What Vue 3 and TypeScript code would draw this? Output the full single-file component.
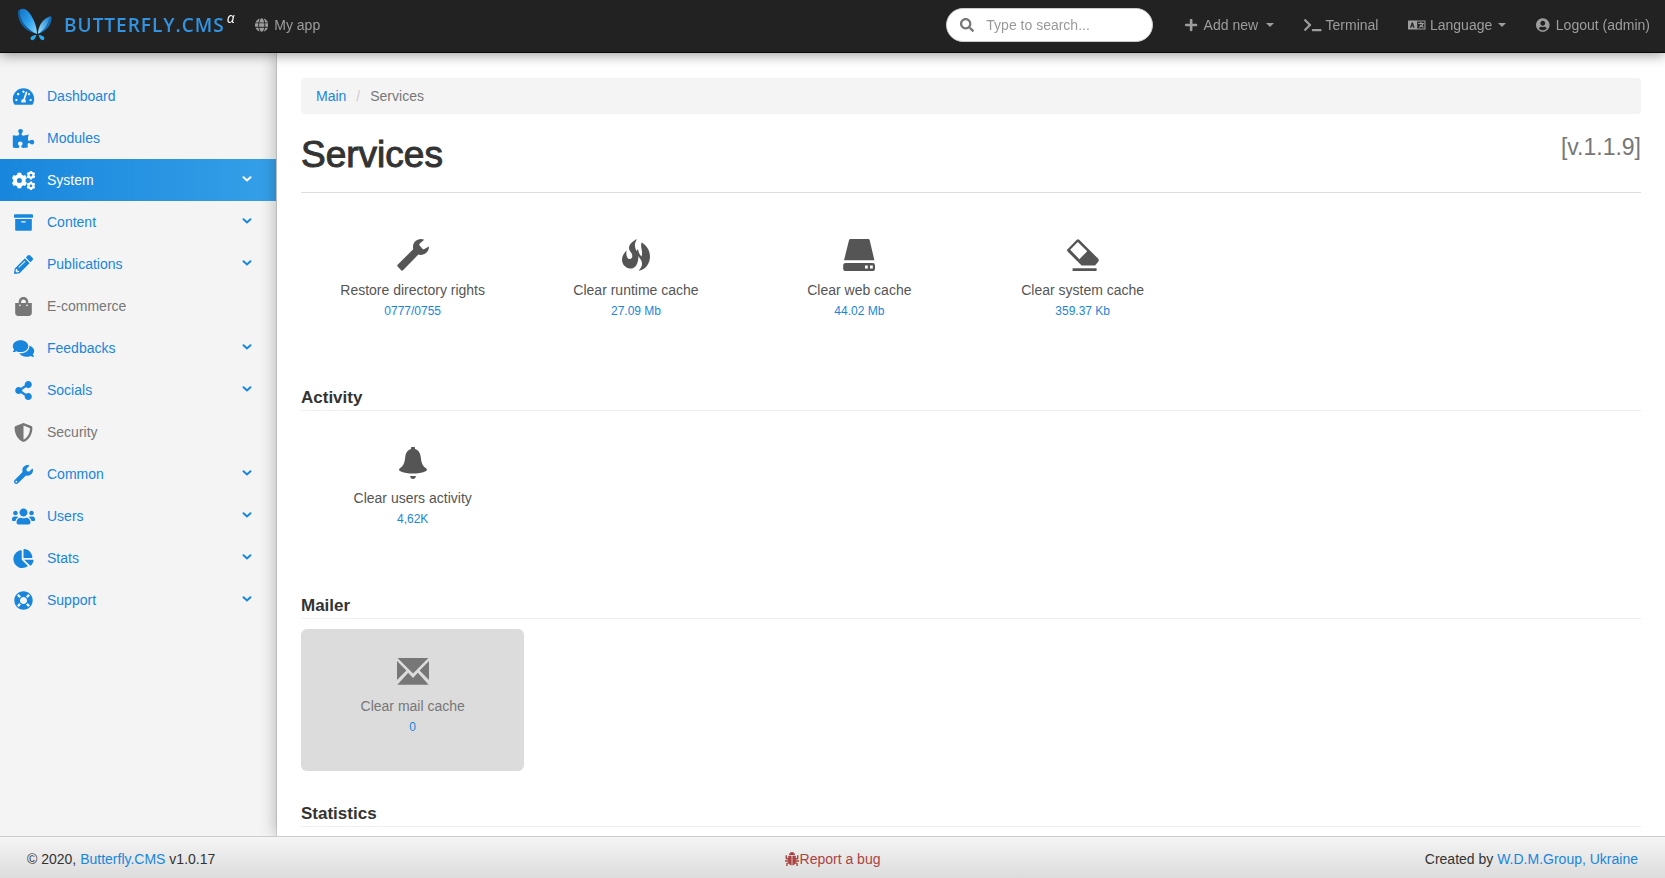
<script setup lang="ts">
import { ref } from 'vue'

interface Glyph {
  box: string
  d: string
  rule?: 'nonzero' | 'evenodd'
}

interface MenuItem {
  label: string
  icon: string
  expandable: boolean
  active?: boolean
  muted?: boolean
}

interface Tile {
  label: string
  value: string
  icon: string
  disabled?: boolean
}

interface Section {
  title: string
  tiles: Tile[]
}

// Closed outline of a toothed wheel with a round hole in it.
function gear(cx: number, cy: number, r: number, teeth: number, hole: number): string {
  const inner = r * 0.8
  const step = (Math.PI * 2) / teeth
  const at = (radius: number, angle: number): string =>
    `${(cx + radius * Math.cos(angle)).toFixed(1)} ${(cy + radius * Math.sin(angle)).toFixed(1)}`
  const points: string[] = []
  for (let i = 0; i < teeth; i++) {
    const a = i * step + Math.PI / 2
    points.push(at(inner, a - step * 0.32), at(r, a - step * 0.22), at(r, a + step * 0.22), at(inner, a + step * 0.32))
  }
  return `M${points.join('L')}ZM${cx + hole} ${cy}a${hole} ${hole} 0 1 0 ${-2 * hole} 0a${hole} ${hole} 0 1 0 ${2 * hole} 0Z`
}

const glyphs: Record<string, Glyph> = {
  gauge: {
    box: '0 0 576 512',
    d: 'M288 32C128.94 32 0 160.94 0 320c0 52.8 14.25 102.26 39.06 144.8 5.61 9.62 16.3 15.2 27.44 15.2h443c11.14 0 21.83-5.58 27.44-15.2C561.75 422.26 576 372.8 576 320c0-159.06-128.94-288-288-288zm0 64c14.71 0 26.58 10.13 30.32 23.65-1.11 2.26-2.64 4.23-3.45 6.67l-9.22 27.67c-5.13 3.49-10.97 6.01-17.64 6.01-17.67 0-32-14.33-32-32S270.33 96 288 96zM96 384c-17.67 0-32-14.33-32-32s14.33-32 32-32 32 14.33 32 32-14.33 32-32 32zm48-160c-17.67 0-32-14.33-32-32s14.33-32 32-32 32 14.33 32 32-14.33 32-32 32zm246.77-72.41l-61.33 184C343.13 347.33 352 364.54 352 384c0 11.72-3.38 22.55-8.88 32H232.88c-5.5-9.45-8.88-20.28-8.88-32 0-33.94 26.5-61.43 59.9-63.59l61.34-184.01c4.17-12.56 17.73-19.45 30.36-15.17 12.57 4.19 19.35 17.79 15.17 30.36zm14.66 57.2l15.52-46.55c3.47-1.29 7.13-2.23 11.05-2.23 17.67 0 32 14.33 32 32s-14.33 32-32 32c-11.38-.01-20.89-6.28-26.57-15.22zM480 384c-17.67 0-32-14.33-32-32s14.33-32 32-32 32 14.33 32 32-14.33 32-32 32z'
  },
  puzzle: {
    box: '0 0 576 512',
    d: 'M519.442 288.651c-41.519 0-59.5 31.593-82.058 31.593C377.409 320.244 432 144 432 144s-196.288 80-196.288-3.297c0-35.827 36.288-46.25 36.288-85.985C272 19.216 243.885 0 210.539 0c-34.654 0-66.366 18.891-66.366 56.346 0 41.364 31.711 59.277 31.711 81.75C175.885 207.719 0 166.758 0 166.758v333.237s178.635 41.047 178.635-28.662c0-22.473-40-40.107-40-81.471 0-37.456 29.25-56.346 63.577-56.346 33.673 0 61.788 19.216 61.788 54.717 0 39.735-36.288 50.158-36.288 85.985 0 60.803 129.675 25.73 181.23 25.73 0 0-34.725-120.101 25.827-120.101 35.962 0 46.423 36.152 86.308 36.152C556.712 416 576 387.99 576 354.443c0-34.199-18.962-65.792-56.558-65.792z'
  },
  gears: {
    box: '0 0 640 512',
    d: gear(206, 256, 220, 6, 70) + gear(528, 108, 124, 6, 38) + gear(528, 404, 124, 6, 38)
  },
  archive: {
    box: '0 0 512 512',
    d: 'M32 448c0 17.7 14.3 32 32 32h384c17.7 0 32-14.3 32-32V160H32v288zm160-212c0-6.6 5.4-12 12-12h104c6.6 0 12 5.4 12 12v8c0 6.6-5.4 12-12 12H204c-6.6 0-12-5.4-12-12v-8zM480 32H32C14.3 32 0 46.3 0 64v48c0 8.8 7.2 16 16 16h480c8.8 0 16-7.2 16-16V64c0-17.7-14.3-32-32-32z'
  },
  pencil: {
    box: '0 0 512 512',
    d: 'M497.9 142.1l-46.1 46.1c-4.7 4.7-12.3 4.7-17 0l-111-111c-4.7-4.7-4.7-12.3 0-17l46.1-46.1c18.7-18.7 49.1-18.7 67.9 0l60.1 60.1c18.8 18.7 18.8 49.1 0 67.9zM284.2 99.8L21.6 362.4.4 483.9c-2.9 16.4 11.4 30.6 27.8 27.8l121.5-21.3 262.6-262.6c4.7-4.7 4.7-12.3 0-17l-111-111c-4.8-4.7-12.4-4.7-17.1 0zM124.1 339.9c-5.5-5.5-5.5-14.3 0-19.8l154-154c5.5-5.5 14.3-5.5 19.8 0s5.5 14.3 0 19.8l-154 154c-5.5 5.5-14.3 5.5-19.8 0zM88 424h48v36.3l-64.5 11.3-31.1-31.1L51.7 376H88v48z'
  },
  bag: {
    box: '0 0 448 512',
    d: 'M352 160v-32C352 57.42 294.579 0 224 0 153.42 0 96 57.42 96 128v32H0v272c0 44.183 35.817 80 80 80h288c44.183 0 80-35.817 80-80V160h-96zm-192-32c0-35.29 28.71-64 64-64s64 28.71 64 64v32H160v-32zm160 120c-13.255 0-24-10.745-24-24s10.745-24 24-24 24 10.745 24 24-10.745 24-24 24zm-192 0c-13.255 0-24-10.745-24-24s10.745-24 24-24 24 10.745 24 24-10.745 24-24 24z'
  },
  comments: {
    box: '0 0 576 512',
    d: 'M416 192c0-88.4-93.1-160-208-160S0 103.6 0 192c0 34.3 14.1 65.9 38 92-13.4 30.2-35.5 54.2-35.8 54.5-2.2 2.3-2.8 5.7-1.5 8.7S4.8 352 8 352c36.6 0 66.9-12.3 88.7-25 32.2 15.7 70.3 25 111.3 25 114.9 0 208-71.6 208-160zm122 220c23.9-26 38-57.7 38-92 0-66.9-53.5-124.2-129.3-148.1.9 6.6 1.3 13.3 1.3 20.1 0 105.9-107.7 192-240 192-10.8 0-21.3-.8-31.7-1.9C207.8 439.6 281.8 480 368 480c41 0 79.1-9.2 111.3-25 21.8 12.7 52.1 25 88.7 25 3.2 0 6.1-1.9 7.3-4.8 1.3-2.9.7-6.3-1.5-8.7-.3-.3-22.4-24.2-35.8-54.5z'
  },
  share: {
    box: '0 0 448 512',
    d: 'M352 320c-22.608 0-43.387 7.819-59.79 20.895l-102.486-64.054a96.551 96.551 0 0 0 0-41.683l102.486-64.054C308.613 184.181 329.392 192 352 192c53.019 0 96-42.981 96-96S405.019 0 352 0s-96 42.981-96 96c0 7.158.79 14.13 2.276 20.841L155.79 180.895C139.387 167.819 118.608 160 96 160c-53.019 0-96 42.981-96 96s42.981 96 96 96c22.608 0 43.387-7.819 59.79-20.895l102.486 64.054A96.301 96.301 0 0 0 256 416c0 53.019 42.981 96 96 96s96-42.981 96-96-42.981-96-96-96z'
  },
  shield: {
    box: '0 0 512 512',
    d: 'M466.5 83.7l-192-80a48.15 48.15 0 0 0-36.9 0l-192 80C27.7 91.1 16 108.6 16 128c0 198.5 114.5 335.7 221.5 380.3 11.8 4.9 25.1 4.9 36.9 0C360.1 472.6 496 349.3 496 128c0-19.4-11.7-36.9-29.5-44.3zM256.1 446.3l-.1-381 175.9 73.3c-3.3 151.4-82.1 261.1-175.8 307.7z'
  },
  wrench: {
    box: '0 0 512 512',
    d: 'M507.73 109.1c-2.24-9.03-13.54-12.09-20.12-5.51l-74.36 74.36-67.88-11.31-11.31-67.88 74.36-74.36c6.62-6.62 3.43-17.9-5.66-20.16-47.38-11.74-99.55.91-136.58 37.93-39.64 39.64-50.55 97.1-34.05 147.2L18.74 402.76c-24.99 24.99-24.99 65.51 0 90.5 24.99 24.99 65.51 24.99 90.5 0l213.21-213.21c50.12 16.71 107.47 5.68 147.37-34.22 37.07-37.07 49.7-89.32 37.91-136.73zM64 472c-13.25 0-24-10.75-24-24 0-13.26 10.75-24 24-24s24 10.74 24 24c0 13.25-10.75 24-24 24z'
  },
  users: {
    box: '0 0 640 512',
    d: 'M96 224c35.3 0 64-28.7 64-64s-28.7-64-64-64-64 28.7-64 64 28.7 64 64 64zm448 0c35.3 0 64-28.7 64-64s-28.7-64-64-64-64 28.7-64 64 28.7 64 64 64zm32 32h-64c-17.6 0-33.5 7.1-45.1 18.6 40.3 22.1 68.9 62 75.1 109.4h66c17.7 0 32-14.3 32-32v-32c0-35.3-28.7-64-64-64zm-256 0c61.9 0 112-50.1 112-112S381.9 32 320 32 208 82.1 208 144s50.1 112 112 112zm76.8 32h-8.3c-20.8 10-43.9 16-68.5 16s-47.6-6-68.5-16h-8.3C179.6 288 128 339.6 128 403.2V432c0 26.5 21.5 48 48 48h288c26.5 0 48-21.5 48-48v-28.8c0-63.6-51.6-115.2-115.2-115.2zm-223.7-13.4C161.5 263.1 145.6 256 128 256H64c-35.3 0-64 28.7-64 64v32c0 17.7 14.3 32 32 32h65.9c6.3-47.4 34.9-87.3 75.2-109.4z'
  },
  pie: {
    box: '0 0 544 512',
    d: 'M527.79 288H290.5l158.03 158.03c6.04 6.04 15.98 6.53 22.19.68 38.7-36.46 65.32-85.61 73.13-140.86 1.34-9.46-6.51-17.85-16.06-17.85zm-15.83-64.8C503.72 103.74 408.26 8.28 288.8.04 279.68-.59 272 7.1 272 16.24V240h223.77c9.14 0 16.82-7.68 16.19-16.8zM224 288V50.71c0-9.55-8.39-17.4-17.84-16.06C86.99 51.49-4.1 155.6.14 280.37 4.5 408.51 114.83 513.59 243.03 511.98c50.4-.63 96.97-16.87 135.26-44.03 7.9-5.6 8.42-17.23 1.57-24.08L224 288z'
  },
  ring: {
    box: '0 0 512 512',
    d: 'M256 8C119.033 8 8 119.033 8 256s111.033 248 248 248 248-111.033 248-248S392.967 8 256 8zm173.696 119.559l-63.399 63.399c-10.987-18.559-26.67-34.252-45.255-45.255l63.399-63.399a218.396 218.396 0 0 1 45.255 45.255zM256 352c-53.019 0-96-42.981-96-96s42.981-96 96-96 96 42.981 96 96-42.981 96-96 96zM127.559 82.304l63.399 63.399c-18.559 10.987-34.252 26.67-45.255 45.255l-63.399-63.399a218.372 218.372 0 0 1 45.255-45.255zM82.304 384.441l63.399-63.399c10.987 18.559 26.67 34.252 45.255 45.255l-63.399 63.399a218.396 218.396 0 0 1-45.255-45.255zm302.137 45.255l-63.399-63.399c18.559-10.987 34.252-26.67 45.255-45.255l63.399 63.399a218.403 218.403 0 0 1-45.255 45.255z'
  },
  search: {
    box: '0 0 512 512',
    d: 'M505 442.7L405.3 343c-4.5-4.5-10.6-7-17-7H372c27.6-35.3 44-79.7 44-128C416 93.1 322.9 0 208 0S0 93.1 0 208s93.1 208 208 208c48.3 0 92.7-16.4 128-44v16.3c0 6.4 2.5 12.5 7 17l99.7 99.7c9.4 9.4 24.6 9.4 33.9 0l28.3-28.3c9.4-9.4 9.4-24.6.1-34zM208 336c-70.7 0-128-57.2-128-128 0-70.7 57.2-128 128-128 70.7 0 128 57.2 128 128 0 70.7-57.2 128-128 128z'
  },
  globe: {
    box: '0 0 496 512',
    d: 'M336.5 160C322 70.7 287.8 8 248 8s-74 62.7-88.5 152h177zM152 256c0 22.2 1.2 43.5 3.3 64h185.3c2.1-20.5 3.3-41.8 3.3-64s-1.2-43.5-3.3-64H155.3c-2.1 20.5-3.3 41.8-3.3 64zm324.7-96c-28.6-67.9-86.5-120.4-158-141.6 24.4 33.8 41.2 84.7 50 141.6h108zM177.2 18.4C105.8 39.6 47.8 92.1 19.3 160h108c8.7-56.9 25.5-107.8 49.9-141.6zM487.4 192H372.7c2.1 21 3.3 42.5 3.3 64s-1.2 43-3.3 64h114.6c5.5-20.5 8.6-41.8 8.6-64s-3.1-43.5-8.5-64zM120 256c0-21.5 1.2-43 3.3-64H8.6C3.2 212.5 0 233.8 0 256s3.2 43.5 8.6 64h114.6c-2-21-3.2-42.5-3.2-64zm39.5 96c14.5 89.3 48.7 152 88.5 152s74-62.7 88.5-152h-177zm159.3 141.6c71.4-21.2 129.4-73.7 158-141.6h-108c-8.8 56.9-25.6 107.8-50 141.6zM19.3 352c28.6 67.9 86.5 120.4 158 141.6-24.4-33.8-41.2-84.7-50-141.6h-108z'
  },
  plus: {
    box: '0 0 448 512',
    d: 'M416 208H272V64c0-17.67-14.33-32-32-32h-32c-17.67 0-32 14.33-32 32v144H32c-17.67 0-32 14.33-32 32v32c0 17.67 14.33 32 32 32h144v144c0 17.67 14.33 32 32 32h32c17.67 0 32-14.33 32-32V304h144c17.67 0 32-14.33 32-32v-32c0-17.67-14.33-32-32-32z'
  },
  terminal: {
    box: '0 0 640 512',
    d: 'M257.981 272.971L63.638 467.314c-9.373 9.373-24.569 9.373-33.941 0L7.029 444.647c-9.357-9.357-9.375-24.522-.04-33.901L161.011 256 6.99 101.255c-9.335-9.379-9.317-24.544.04-33.901l22.667-22.667c9.373-9.373 24.569-9.373 33.941 0L257.981 239.03c9.373 9.372 9.373 24.568 0 33.941zM640 456v-32c0-13.255-10.745-24-24-24H312c-13.255 0-24 10.745-24 24v32c0 13.255 10.745 24 24 24h304c13.255 0 24-10.745 24-24z'
  },
  language: {
    box: '0 0 640 512',
    d: 'M24 88h592a24 24 0 0 1 24 24v288a24 24 0 0 1-24 24H24a24 24 0 0 1-24-24V112a24 24 0 0 1 24-24ZM336 128V384H600V128ZM136 168L72 352H120L132 314H184L196 352H244L180 168ZM158 228L172 274H144ZM446 148H494V180H580V220H560Q550 256 522 288Q544 302 576 312L560 354Q520 342 490 318Q456 344 408 356L392 314Q430 306 458 288Q440 268 430 244H476Q482 252 490 260Q506 242 512 220H372V180H446Z'
  },
  account: {
    box: '0 0 496 512',
    d: 'M248 8C111 8 0 119 0 256s111 248 248 248 248-111 248-248S385 8 248 8zm0 96c48.6 0 88 39.4 88 88s-39.4 88-88 88-88-39.4-88-88 39.4-88 88-88zm0 344c-58.7 0-111.3-26.6-146.5-68.2 18.8-35.4 55.6-59.8 98.5-59.8 2.4 0 4.8.4 7.1 1.1 13 4.2 26.6 6.9 40.9 6.9 14.3 0 28-2.7 40.9-6.9 2.3-.7 4.7-1.1 7.1-1.1 42.9 0 79.7 24.4 98.5 59.8C359.3 421.4 306.7 448 248 448z'
  },
  spanner: {
    box: '0 0 32 32',
    d: 'M27.2 .8C24 -.6 20.4 .2 18 2.6C16.2 4.6 15.6 7.4 16.2 10.2L.6 25.8Q-.2 26.6 .6 27.4L4.4 31.4Q5.2 32 6 31.2L21.4 15.6C24.200 16.400 27 15.800 29.200 13.800C31.400 11.800 32.200 9.600 31.800 7.400L27 10.200Q26.200 10.600 25.400 9.800L22.600 6.400Q22 5.400 22.800 4.600Z'
  },
  fire: {
    box: '0 0 32 32',
    rule: 'nonzero',
    d: 'M17 0C13.600 5.500 15 9 17 13C18.500 16 18.800 18.500 18 21.500C17 27 14 30 10 29.500C5 29 2 25 2 20.500C2 17 4 14 6.500 11.500C6 15 6.500 18 8 19.500C10 21 13 19.500 12.200 16C11.500 13 9 12 9 9C9 5 13 2 17 0ZM21.500 3.500C26 6 30 11 30 17.500C30 25 25 31 18.500 31.800C22 28 23 25 21 21C19 18 17.500 16 16.500 12L18 10C18.500 13 19.500 15.500 21.500 17.500C23.500 13 20 8 21.500 3.500Z'
  },
  drive: {
    box: '0 0 32 32',
    d: 'M7.400 0H25.200Q26.400 0 26.700 1.200L31.400 21.200H1L6 1.200Q6.300 0 7.400 0ZM3 24H29.600Q32 24 32 26.400V29.400Q32 32 29.400 32H3Q.2 32 .2 29.400V26.400Q.2 24 3 24ZM22 26.600V29.400H24.800V26.600ZM27 26.600V29.400H29.800V26.600Z'
  },
  eraser: {
    box: '0 0 32 32',
    d: 'M9.800 .8Q11 -.4 12.200 .8L31 19.600Q32.400 21 31.400 22.400L28 26.600H14.600L.8 12.800Q-.6 11.200 .8 10ZM10.800 3L3.200 10.800L12.400 20.200L20.200 12.200ZM5.600 29.200H29.600V32H5.600Z'
  },
  bell: {
    box: '0 0 32 32',
    d: 'M14 2V.8Q14 0 14.800 0H17.200Q18 0 18 .8V2C21.800 3 23.400 6.600 23.800 10.400C24.400 15.600 25.400 18.600 29.400 21.600Q30.800 22.800 29.200 24C25.600 26 20 26.600 16 26.600S6.400 26 2.800 24Q1.200 22.800 2.600 21.600C6.600 18.600 7.600 15.600 8.200 10.400C8.600 6.600 10.200 3 14 2ZM13 29H19Q18.400 32 16 32T13 29Z'
  },
  envelope: {
    box: '0 0 32 32',
    d: 'M.6 3H31.400L16 18.600ZM0 6L9.400 15.600L0 25ZM32 6V25L22.600 15.600ZM.4 29.800L11.200 17.800L16 23L20.800 17.800L31.600 29.800Z'
  },
  bug: {
    box: '0 0 14 14',
    d: 'M4 3Q4.500 0 7 0T10 3ZM3.200 3.800H6.600V13.400Q3.600 12.800 3.200 9.800H0V8.300H3.200V7.400H1.800Q.6 7.400 .6 6.200V3.200H2V5.900H3.200ZM10.800 3.800H7.400V13.400Q10.400 12.800 10.800 9.800H14V8.300H10.800V7.400H12.200Q13.400 7.400 13.400 6.200V3.200H12V5.900H10.800ZM3.300 10.300L4 11.300L2.600 12V14H1.200V11.300ZM10.700 10.300L10 11.300L11.400 12V14H12.800V11.300Z'
  }
}

const menu: MenuItem[] = [
  { label: 'Dashboard', icon: 'gauge', expandable: false },
  { label: 'Modules', icon: 'puzzle', expandable: false },
  { label: 'System', icon: 'gears', expandable: true, active: true },
  { label: 'Content', icon: 'archive', expandable: true },
  { label: 'Publications', icon: 'pencil', expandable: true },
  { label: 'E-commerce', icon: 'bag', expandable: false, muted: true },
  { label: 'Feedbacks', icon: 'comments', expandable: true },
  { label: 'Socials', icon: 'share', expandable: true },
  { label: 'Security', icon: 'shield', expandable: false, muted: true },
  { label: 'Common', icon: 'wrench', expandable: true },
  { label: 'Users', icon: 'users', expandable: true },
  { label: 'Stats', icon: 'pie', expandable: true },
  { label: 'Support', icon: 'ring', expandable: true }
]

const sections: Section[] = [
  {
    title: '',
    tiles: [
      { label: 'Restore directory rights', value: '0777/0755', icon: 'spanner' },
      { label: 'Clear runtime cache', value: '27.09 Mb', icon: 'fire' },
      { label: 'Clear web cache', value: '44.02 Mb', icon: 'drive' },
      { label: 'Clear system cache', value: '359.37 Kb', icon: 'eraser' }
    ]
  },
  { title: 'Activity', tiles: [{ label: 'Clear users activity', value: '4,62K', icon: 'bell' }] },
  { title: 'Mailer', tiles: [{ label: 'Clear mail cache', value: '0', icon: 'envelope', disabled: true }] },
  { title: 'Statistics', tiles: [] }
]

const query = ref('')
</script>

<template>
  <div class="page">
    <header class="topbar">
      <a href="#" class="brand">
        <svg class="logo" viewBox="0 0 34 34" aria-hidden="true">
          <defs>
            <linearGradient id="wing-left" x1="0" y1="0" x2="1" y2="1">
              <stop offset="0" stop-color="#1473c4" />
              <stop offset=".5" stop-color="#2b9dea" />
              <stop offset="1" stop-color="#8fdcff" />
            </linearGradient>
            <linearGradient id="wing-right" x1="1" y1="0" x2="0" y2="1">
              <stop offset="0" stop-color="#1b7fd0" />
              <stop offset="1" stop-color="#9be4ff" />
            </linearGradient>
          </defs>
          <path fill="#145f9e" d="M0 5C0 14 6 23 18.500 26C11 20 6 13 4 2C1 1 0 2 0 5Z" />
          <path fill="url(#wing-left)" d="M2 1.500C6 -1 11 3 14 9C17 14 19 20 19 26C9 21 1 13 2 1.500Z" />
          <path fill="#176fb3" d="M33.500 9C34 16 29 23 20.500 26C26 20 29 15 30.500 9C32 8 33 8 33.500 9Z" />
          <path fill="url(#wing-right)" d="M31.500 8.500C30 17 26 22 20 26C20 20 23 12 31.500 8.500Z" />
          <path fill="#2baaf0" d="M18.500 27C17 32 14.500 33 13 31.500C11.500 29.500 14 27 18.500 27ZM20.500 27C22 32 24.500 33 26 31.500C27.500 29.500 25 27 20.500 27Z" />
        </svg>
        <span class="wordmark">BUTTERFLY.CMS</span><sup class="stage">α</sup>
      </a>
      <a href="#" class="nav-link">
        <svg class="nav-icon" :viewBox="glyphs.globe.box" aria-hidden="true"><path :d="glyphs.globe.d" /></svg>
        My app
      </a>
      <form class="search" role="search" @submit.prevent>
        <svg class="search-icon" :viewBox="glyphs.search.box" aria-hidden="true"><path :d="glyphs.search.d" /></svg>
        <input v-model="query" type="text" aria-label="Search" placeholder="Type to search..." />
      </form>
      <nav class="actions">
        <button type="button" class="nav-link">
          <svg class="nav-icon" :viewBox="glyphs.plus.box" aria-hidden="true"><path :d="glyphs.plus.d" /></svg>
          Add new
          <span class="caret"></span>
        </button>
        <a href="#" class="nav-link tight">
          <svg class="nav-icon" :viewBox="glyphs.terminal.box" aria-hidden="true"><path :d="glyphs.terminal.d" /></svg>
          Terminal
        </a>
        <button type="button" class="nav-link tight">
          <svg class="nav-icon" :viewBox="glyphs.language.box" aria-hidden="true">
            <path fill-rule="evenodd" :d="glyphs.language.d" />
          </svg>
          Language
          <span class="caret"></span>
        </button>
        <a href="#" class="nav-link">
          <svg class="nav-icon" :viewBox="glyphs.account.box" aria-hidden="true"><path :d="glyphs.account.d" /></svg>
          Logout (admin)
        </a>
      </nav>
    </header>

    <div class="body">
      <aside class="sidebar">
        <ul class="menu">
          <li v-for="item in menu" :key="item.label">
            <a href="#" class="menu-link" :class="{ active: item.active, muted: item.muted }">
              <svg class="menu-icon" :viewBox="glyphs[item.icon].box" aria-hidden="true">
                <path fill-rule="evenodd" :d="glyphs[item.icon].d" />
              </svg>
              <span class="menu-label">{{ item.label }}</span>
              <svg v-if="item.expandable" class="chevron" viewBox="0 0 10 10" aria-hidden="true">
                <path d="M1.500 3.200L5 6.500L8.500 3.200" />
              </svg>
            </a>
          </li>
        </ul>
      </aside>

      <main class="content">
        <nav class="breadcrumb" aria-label="Breadcrumb">
          <a href="#">Main</a>
          <span class="slash">/</span>
          <span>Services</span>
        </nav>
        <div class="page-header">
          <h1>Services</h1>
          <span class="version">[v.1.1.9]</span>
        </div>
        <section v-for="section in sections" :key="section.title" class="section">
          <h2 v-if="section.title">{{ section.title }}</h2>
          <div v-if="section.tiles.length" class="tiles">
            <button
              v-for="tile in section.tiles"
              :key="tile.label"
              type="button"
              class="tile"
              :disabled="tile.disabled"
            >
              <svg class="tile-icon" :viewBox="glyphs[tile.icon].box" aria-hidden="true">
                <path :fill-rule="glyphs[tile.icon].rule ?? 'evenodd'" :d="glyphs[tile.icon].d" />
              </svg>
              <span class="tile-label">{{ tile.label }}</span>
              <span class="tile-value">{{ tile.value }}</span>
            </button>
          </div>
        </section>
      </main>
    </div>

    <footer class="footer">
      <span>© 2020, <a href="#">Butterfly.CMS</a> v1.0.17</span>
      <a href="#" class="report">
        <svg class="bug" :viewBox="glyphs.bug.box" aria-hidden="true"><path :d="glyphs.bug.d" /></svg>Report a bug
      </a>
      <span class="credit">Created by <a href="#">W.D.M.Group, Ukraine</a></span>
    </footer>
  </div>
</template>

<style>
body {
  margin: 0;
}
</style>

<style scoped>
.page,
.page * {
  box-sizing: border-box;
}

.page {
  display: flex;
  flex-direction: column;
  height: 100vh;
  background: #fff;
  color: #333;
  font-family: "Liberation Sans", Arial, sans-serif;
  font-size: 14px;
  line-height: 20px;
}

a {
  color: #1886dc;
  text-decoration: none;
}

button,
input {
  font: inherit;
}

svg {
  display: block;
  flex: none;
  fill: currentColor;
}

.topbar {
  position: relative;
  z-index: 3;
  display: flex;
  flex: none;
  align-items: center;
  height: 53px;
  padding-bottom: 2px;
  border-bottom: 1px solid #080808;
  background: #222;
  box-shadow: 0 2px 12px rgba(0, 0, 0, 0.4);
}

.brand {
  display: flex;
  align-items: center;
  padding-left: 18px;
}

.logo {
  width: 34px;
  height: 34px;
}

.wordmark {
  margin-left: 12px;
  color: #3293e0;
  font-family: "Open Sans", "Noto Sans", sans-serif;
  font-size: 19px;
  font-weight: 600;
  letter-spacing: 1px;
}

.stage {
  align-self: flex-start;
  margin-left: 2px;
  color: #fff;
  font-family: "Open Sans", sans-serif;
  font-size: 14px;
  font-style: italic;
  line-height: 20px;
}

.nav-link {
  display: flex;
  align-items: center;
  gap: 6px;
  padding: 15px;
  border: 0;
  background: none;
  color: #9d9d9d;
  line-height: 20px;
  white-space: nowrap;
}

.nav-link.tight {
  gap: 4px;
}

.brand + .nav-link {
  padding-left: 20px;
}

.nav-icon {
  width: auto;
  height: 14px;
}

.caret {
  margin-left: 2px;
  border-top: 4px solid currentColor;
  border-right: 4px solid transparent;
  border-left: 4px solid transparent;
}

.search {
  display: flex;
  align-items: center;
  gap: 12px;
  width: 207px;
  height: 34px;
  margin-right: 17px;
  margin-left: auto;
  padding: 0 13px;
  border: 1px solid #ccc;
  border-radius: 17px;
  background: #fff;
}

.search-icon {
  width: 14px;
  height: 14px;
  color: #777;
}

.search input {
  flex: 1;
  min-width: 0;
  padding: 0;
  border: 0;
  outline: 0;
  background: none;
  color: #555;
}

.search input::placeholder {
  color: #999;
  opacity: 1;
}

.actions {
  display: flex;
  align-items: center;
}

.body {
  display: flex;
  flex: 1;
  min-height: 0;
}

.sidebar {
  flex: none;
  width: 277px;
  border-right: 1px solid #ddd;
  background: #f4f4f4;
}

.menu {
  margin: 0;
  padding: 22px 0 0;
  list-style: none;
}

.menu-link {
  display: flex;
  align-items: center;
  gap: 12px;
  height: 42px;
  padding: 0 24px 0 12px;
}

.menu-link.muted {
  color: #777;
}

.menu-link.active {
  background: linear-gradient(90deg, #1886dc, #35a0e8);
  color: #fff;
}

.menu-icon {
  width: 23px;
  height: 19px;
}

.menu-label {
  flex: 1;
}

.chevron {
  width: 10px;
  height: 10px;
  margin-bottom: 2px;
  fill: none;
  stroke: currentColor;
  stroke-linecap: round;
  stroke-width: 2;
}

.content {
  position: relative;
  z-index: 1;
  flex: 1;
  min-width: 0;
  padding: 25px 24px 0;
  overflow-y: auto;
  scrollbar-width: none;
  background: #fff;
  box-shadow: 0 0 16px rgba(0, 0, 0, 0.3);
}

.breadcrumb {
  display: flex;
  gap: 10px;
  padding: 8px 15px;
  border-radius: 4px;
  background: #f4f4f4;
  color: #777;
}

.slash {
  color: #ccc;
}

.page-header {
  display: flex;
  align-items: flex-start;
  justify-content: space-between;
  padding: 20px 0 17px;
  border-bottom: 1px solid #ddd;
}

h1 {
  margin: 0;
  font-size: 37px;
  font-weight: 400;
  line-height: 41px;
  -webkit-text-stroke: 1px currentColor;
}

.version {
  color: #777;
  font-size: 23px;
  line-height: 26px;
}

.section {
  padding-bottom: 24px;
}

h2 {
  margin: 0 0 10px;
  padding: 8px 0 1px;
  border-bottom: 1px solid #f0f0f0;
  font-size: 17px;
  font-weight: 700;
  line-height: 22px;
}

.tiles {
  display: grid;
  grid-template-columns: repeat(6, 1fr);
}

.page-header + .section {
  padding-top: 20px;
}

.tile {
  display: flex;
  flex-direction: column;
  align-items: center;
  height: 142px;
  padding: 26px 10px 0;
  border: 0;
  border-radius: 6px;
  background: none;
  color: #555;
}

.tile:disabled {
  background: #dcdcdc;
  color: #777;
}

.tile-icon {
  width: 32px;
  height: 32px;
}

.tile-label {
  margin-top: 9px;
  line-height: 20px;
}

.tile-value {
  color: #1886dc;
  font-size: 12px;
  line-height: 22px;
}

.footer {
  position: relative;
  z-index: 2;
  display: grid;
  flex: none;
  grid-template-columns: 1fr auto 1fr;
  align-items: center;
  height: 42px;
  padding: 2px 27px 0;
  border-top: 1px solid #ccc;
  background: linear-gradient(#f5f5f5, #dcdcdc);
}

.report {
  display: flex;
  align-items: center;
  gap: 1px;
  color: #a94442;
}

.bug {
  width: 14px;
  height: 14px;
}

.credit {
  text-align: right;
}
</style>
